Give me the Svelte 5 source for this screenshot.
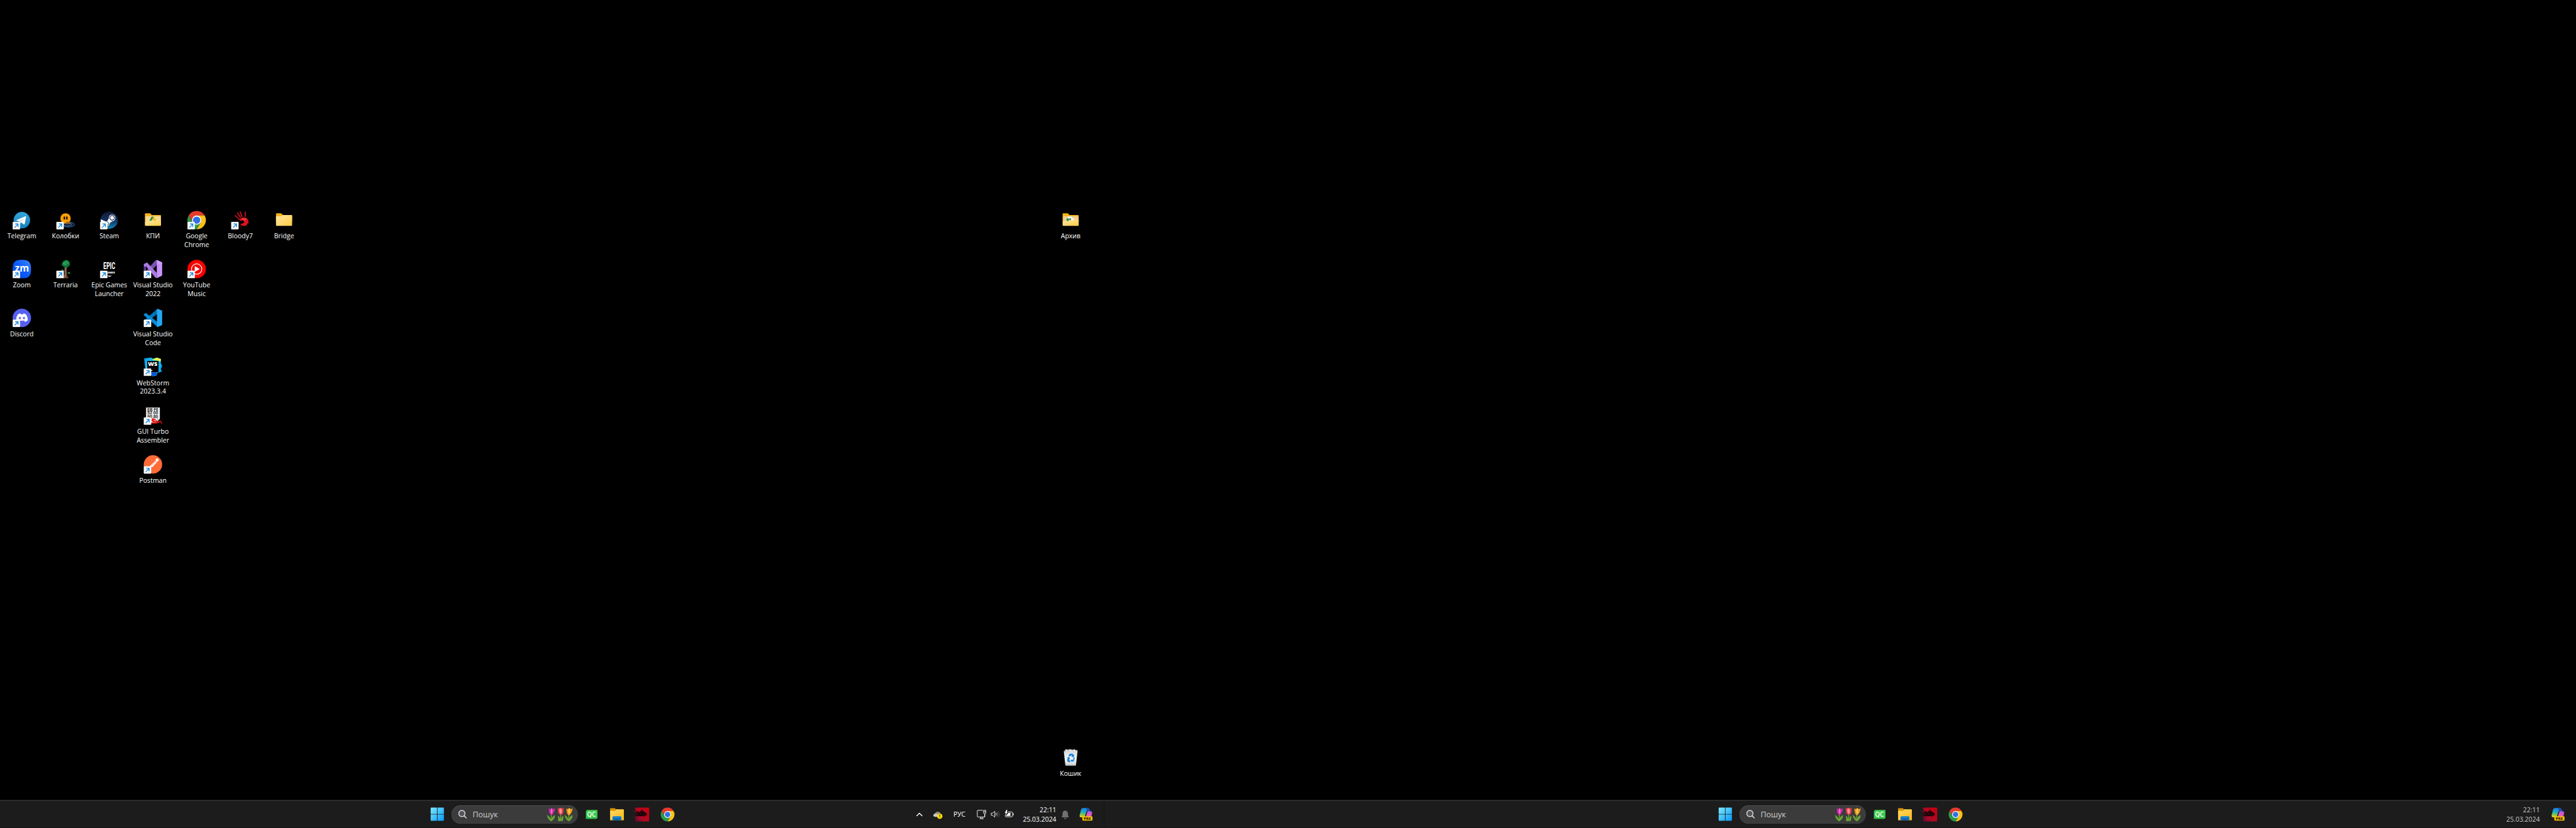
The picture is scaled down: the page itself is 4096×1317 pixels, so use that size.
<script>
  const shortcuts = [
    { icon: 'telegram', lines: ['Telegram'], col: 1, row: 1, link: true },
    { icon: 'kolobki', lines: ['Колобки'], col: 2, row: 1, link: true },
    { icon: 'steam', lines: ['Steam'], col: 3, row: 1, link: true },
    { icon: 'folder-drive', lines: ['КПИ'], col: 4, row: 1 },
    { icon: 'chrome', lines: ['Google', 'Chrome'], col: 5, row: 1, link: true },
    { icon: 'bloody', lines: ['Bloody7'], col: 6, row: 1, link: true },
    { icon: 'folder', lines: ['Bridge'], col: 7, row: 1 },
    { icon: 'folder-docs', lines: ['Архив'], col: 25, row: 1 },
    { icon: 'zoom', lines: ['Zoom'], col: 1, row: 2, link: true },
    { icon: 'terraria', lines: ['Terraria'], col: 2, row: 2, link: true },
    { icon: 'epic', lines: ['Epic Games', 'Launcher'], col: 3, row: 2, link: true },
    { icon: 'vs', lines: ['Visual Studio', '2022'], col: 4, row: 2, link: true },
    { icon: 'ytmusic', lines: ['YouTube', 'Music'], col: 5, row: 2, link: true },
    { icon: 'discord', lines: ['Discord'], col: 1, row: 3, link: true },
    { icon: 'vscode', lines: ['Visual Studio', 'Code'], col: 4, row: 3, link: true },
    { icon: 'webstorm', lines: ['WebStorm', '2023.3.4'], col: 4, row: 4, link: true },
    { icon: 'tasm', lines: ['GUI Turbo', 'Assembler'], col: 4, row: 5, link: true },
    { icon: 'postman', lines: ['Postman'], col: 4, row: 6, link: true },
    { icon: 'bin', lines: ['Кошик'], col: 25, row: 12 }
  ];
</script>

{#snippet chromeLogo()}
  <path fill="#e33b2e" d="M6.400 24A48 48 0 0 1 89.600 24H48L27.200 60Z" />
  <path fill="#fbc116" d="M89.600 24A48 48 0 0 1 48 96L68.800 60 48 24Z" />
  <path fill="#2a9a48" d="M48 96A48 48 0 0 1 6.400 24L27.200 60 48 72 68.800 60Z" />
  <circle cx="48" cy="48" r="24" fill="#fff" />
  <circle cx="48" cy="48" r="19" fill="#2b72e8" />
{/snippet}

{#snippet folderBack()}
  <path fill="#f5b21b" d="M6 16q0-4 4-4h20q3 0 5 2l7 7h44q4 0 4 4v30H6z" />
{/snippet}

{#snippet appIcon(name)}
  {#if name === 'telegram'}
    <circle cx="48" cy="48" r="43" fill="url(#g-tg)" />
    <path fill="#fff" d="M19 48 66 28q4-1 4 3l-7 37q-1 4-5 2L45 60l-7 7q-3 1-3-3l-2-10-13-4q-3-1-1-2z" />
    <path fill="#b9d9ec" d="M34 54 62 36 41 56l-4 11z" />
  {:else if name === 'kolobki'}
    <ellipse cx="63" cy="71" rx="32" ry="13" fill="#071a35" stroke="#3973bd" stroke-width="3" />
    <ellipse cx="58" cy="70" rx="22" ry="8" fill="none" stroke="#83b6f0" stroke-width="2" />
    <circle cx="48" cy="39" r="27" fill="#ff9f00" />
    <ellipse cx="42" cy="37" rx="4.500" ry="9" fill="#241500" />
    <ellipse cx="55" cy="37" rx="4.500" ry="9" fill="#241500" />
    <path fill="#8b642c" d="M46 67q4-11 16-11 10 0 15 10-14 5-31 1z" />
  {:else if name === 'steam'}
    <circle cx="48" cy="48" r="45" fill="url(#g-steam)" />
    <path fill="#fff" d="M3 43 29 55q5-2 8 0L46 38q0-18 16-19 18 2 18 18-1 16-17 17L50 64q-1 15-14 15-10 0-13-10L4 60z" />
    <circle cx="63" cy="36" r="12" fill="#fff" stroke="#15264b" stroke-width="4" />
    <circle cx="36" cy="66" r="9" fill="none" stroke="#15264b" stroke-width="3" />
  {:else if name === 'folder'}
    {@render folderBack()}
    <path fill="url(#g-folder)" d="M6 28h27l8-7h46q3 0 3 4v49q0 4-4 4H10q-4 0-4-4z" />
  {:else if name === 'folder-drive'}
    {@render folderBack()}
    <path fill="#f6d992" d="M9 27h79v40H9z" />
    <path fill="#238b46" d="M41 30h11L40 52H29z" />
    <path fill="#3fa65a" d="M52 30 42 42l-2 10z" opacity=".7" />
    <path fill="#f7b400" d="M52 30 66 52H54L46 40z" />
    <path fill="url(#g-folder)" d="M6 55h22l8-5h54v24q0 4-4 4H10q-4 0-4-4z" />
  {:else if name === 'folder-docs'}
    {@render folderBack()}
    <path fill="#f4d08a" d="M9 27h79v40H9z" />
    <path fill="#fff" d="M34 29h19l12 10v12H34z" />
    <path fill="#cfd6dc" d="M53 29v10h12z" />
    <path fill="#1a8a4e" d="M27 39h23v13H27z" />
    <path fill="#7dc49c" d="M33 43h11v3H33z" />
    <path fill="url(#g-folder)" d="M6 53h28l8-6h48v27q0 4-4 4H10q-4 0-4-4z" />
  {:else if name === 'chrome'}
    {@render chromeLogo()}
  {:else if name === 'bloody'}
    <g fill="none" stroke="#c8101c" stroke-linecap="round">
      <path stroke-width="5.500" d="M22 25 43 44" />
      <path stroke-width="6" d="M33 10 49 34" />
      <path stroke-width="6" d="M47 5 57 30" />
      <path stroke-width="6" d="M73 6 74 28" />
      <path stroke-width="2" d="M22 25l-3-3M46 76 56 91M75 68l5 14M88 58l5 4" />
    </g>
    <path fill="#d8131f" d="M44 43q12-11 29-9 15 3 17 19l-2 8 6 1-9 4q-6 14-20 12-14 0-17-9l12-4q9-3 7-10-5-7-15-4-6 4-8-8z" />
    <path fill="#f04a4a" d="M55 40q15-5 24 3l-5 6q-8-6-19-3z" />
  {:else if name === 'zoom'}
    <path fill="url(#g-zoom)" d="M48 0C84 0 96 12 96 48S84 96 48 96 0 84 0 48 12 0 48 0Z" />
    <text class="zm" x="12" y="62" textLength="73" lengthAdjust="spacingAndGlyphs">zm</text>
  {:else if name === 'terraria'}
    <path fill="#7b513c" d="M42 38h13l-1 35 8 23H37l6-21z" />
    <path fill="#a5745a" d="M46 42h4v48h-4z" />
    <path fill="#4e3226" d="M52 46h3v12h-3zM42 64h4v8h-4zM51 76h4v14h-4zM56 88h6v8h-6z" />
    <path fill="#147a3c" d="M36 5h8V2h15v3h7v7h4v18h-5v7h-7v5H44v-4h-8v-6h-7V16h4v-6h3z" />
    <path fill="#23a455" d="M36 12h10V6h12v8h8v8H54v6H40v-5h-6v-6h2z" />
    <path fill="#0b5428" d="M38 32h8v4h-8zM56 29h7v4h-7zM48 17h5v4h-5zM60 17h5v3h-5z" />
    <path fill="#1c9c48" d="M27 51h9v9h-9zM62 64h9v9h-9z" />
    <path fill="#60453a" d="M36 56h7v4h-7zM55 67h8v4h-8z" />
  {:else if name === 'epic'}
    <text class="epic-main" x="17" y="49" textLength="62" lengthAdjust="spacingAndGlyphs">EPIC</text>
    <text class="epic-sub" x="38" y="70" textLength="40" lengthAdjust="spacingAndGlyphs">AMES</text>
    <path fill="#fff" d="M37 83h25l-13 6z" />
  {:else if name === 'vs'}
    <path fill="#58398c" d="M0 23 18 14l5 8v30L0 73z" />
    <path fill="#000" d="m12 32 18 16-18 16z" />
    <path fill="#7853ae" d="M68 0v27L18 81 0 73 58 6z" />
    <path fill="#a979df" d="M0 23 17 14l51 54v28l-9-5L12 34 3 37z" />
    <path fill="#c793fb" d="m68 0 28 14v68L68 96z" />
    <path fill="#d8aaff" d="M68 0 96 14v8H68z" opacity=".45" />
  {:else if name === 'ytmusic'}
    <circle cx="48" cy="48" r="48" fill="#f90000" />
    <circle cx="48" cy="48" r="27" fill="none" stroke="#fff" stroke-width="4" />
    <path fill="#fff" d="M38 33 64 48 38 63z" />
  {:else if name === 'discord'}
    <circle cx="48" cy="48" r="48" fill="#5661f0" />
    <path fill="#fff" d="M26 31q7-5 15-6l3 5h9l3-5q8 1 15 6 8 13 8 30-7 6-15 8l-4-6q3 0 5-2-17 5-34 0 2 2 5 2l-4 6q-8-2-14-8 0-18 8-30z" />
    <ellipse cx="38" cy="49" rx="5.500" ry="6" fill="#5661f0" />
    <ellipse cx="59" cy="49" rx="5.500" ry="6" fill="#5661f0" />
  {:else if name === 'vscode'}
    <path fill="#0074bb" d="M72 0v26L12 74q-3 1-5-1l-6-6q-1-3 1-5z" />
    <path fill="#0889d6" d="M72 96V70L12 23q-3-1-5 1l-6 6q-1 3 1 5z" />
    <path fill="#25a7f1" d="m72 0 24 11v74L72 96q-4-2-3-6V6q0-4 3-6z" />
  {:else if name === 'webstorm'}
    <path fill="url(#g-ws)" d="M2 4 38 0l10 6 20-6 22 8-1 20 7 16-7 17 6 12-24 8-5 14-22 3-9-13H14L6 42z" />
    <path fill="#e9f04a" d="M42 12 68 0l22 8-3 14-12-5z" />
    <path fill="#0b51db" d="M33 79h34l1 14-22 3z" />
    <path d="M18 18h59v59H18z" />
    <text class="ws" x="22" y="45" textLength="50" lengthAdjust="spacingAndGlyphs">WS</text>
    <path fill="#fff" d="M37 66h8v4h-8z" />
  {:else if name === 'tasm'}
    <path fill="#f2f2f2" d="M12 6h72v58L66 84H12z" />
    <path fill="#bdbdbd" d="M66 84V66h18z" />
    <text class="hex" x="19" y="25" textLength="56" lengthAdjust="spacingAndGlyphs">EB F6</text>
    <text class="hex" x="19" y="43" textLength="56" lengthAdjust="spacingAndGlyphs">52 00</text>
    <text class="hex" x="19" y="61" textLength="56" lengthAdjust="spacingAndGlyphs">90 80</text>
    <path fill="none" stroke="#f01010" stroke-width="5" d="M48 60v20h12M62 68H44v8h20v11H38M68 89V78l8 7 7-8 5 1 6 11" />
  {:else if name === 'postman'}
    <circle cx="48" cy="48" r="48" fill="#ff6c37" />
    <circle cx="70" cy="25" r="8" fill="#fff" />
    <path fill="#fff" d="M62 28 30 59l6 2 9 1 25-27q-6-1-8-7z" />
    <path fill="none" stroke="#ff6c37" stroke-width="2" d="m39 57 23-23M70 22l4 5" />
  {:else if name === 'bin'}
    <path fill="#aab1b5" d="m14 13 8-9 12 3 9-4 14 4 10-3 7 5 9-1 1 9z" />
    <path fill="#eef1f2" d="m18 14 9-8 9 6 13-6 9 6 11-6 9 8z" />
    <path fill="url(#g-bin)" d="M12 14h72l-8 72q-1 4-5 4H25q-4 0-5-4z" />
    <path fill="#b8bfc2" d="M21 82h54l-1 8H22z" opacity=".6" />
    <g fill="#1683dc">
      <path d="m39 33 7-6h12l5 8 4-2-3 14-13-5 4-2-4-6-5 9-10-5z" />
      <path d="m29 48 12-3 4 13-4-2-3 6h7v10H35l-6-11 4-9z" />
      <path d="m61 50 7-4 1 8-5 14H57v4L47 64l10-9v5h6z" />
    </g>
  {/if}
{/snippet}

{#snippet tulip(cls, x)}
  <g class={cls} transform="translate({x} 0)">
    <path class="leaf" d="M21 34h5v37h-5z" />
    <path class="leaf" d="M22 70Q8 66 0 38q18 8 24 32zM24 70q0-24 19-32-1 24-19 32z" />
    <path class="petal" d="M10 4l8 4 7-7 8 6 10-2q-1 12-7 22-6 12-13 13Q10 36 10 4z" />
    <path class="shine" d="M24 3q10 8 2 32-12-14-2-32z" />
  </g>
{/snippet}

{#snippet launcher()}
  <div class="launcher">
    <svg class="start" viewBox="0 0 69 69">
      <path fill="url(#g-win)" d="M0 3q0-3 3-3h30v33H0zM36 0h30q3 0 3 3v30H36zM0 36h33v33H3q-3 0-3-3zM36 36h33v30q0 3-3 3H36z" />
    </svg>
    <div class="search">
      <svg class="lens" viewBox="0 0 15 15">
        <circle cx="6.300" cy="6.300" r="5.400" fill="#55555a" stroke="#dcdce0" stroke-width="1.500" />
        <path d="m10.300 10.300 3.600 3.700" stroke="#dcdce0" stroke-width="1.700" stroke-linecap="round" />
      </svg>
      <span class="hint">Пошук</span>
      <svg class="tulips" viewBox="0 0 141 72">
        {@render tulip('pink', 3)}
        <g class="red">
          <path class="leaf" d="M73 36h5v34h-5zM60 42q13 8 14 28H62q1-14-2-28zM90 42q-12 8-14 28h10q4-14 4-28z" />
          <path class="petal" d="M60 4q15-7 31 0 2 34-15 34T60 4z" />
          <path class="shine" d="M68 8q8-5 12 0 4 18-4 26-9-8-8-26z" />
        </g>
        {@render tulip('gold', 95)}
      </svg>
    </div>
    <svg class="qc" viewBox="0 0 60 48">
      <path fill="#3acb4e" d="M6 0h54v42l-6 5H0V6z" />
      <path fill="#22943a" d="M0 43h58l-4 4H0z" opacity=".6" />
      <text class="qc-text" x="6" y="35" textLength="45" lengthAdjust="spacingAndGlyphs">QC</text>
    </svg>
    <svg class="explorer" viewBox="0 0 72 66">
      <path fill="#d99608" d="M0 2q0-2 3-2h20q3 0 5 3l3 3h10v14H0z" />
      <path fill="url(#g-exp)" d="M0 14h26l7-8h36q3 0 3 3v51q0 3-3 3H3q-3 0-3-3z" />
      <path fill="#0b6fc2" d="M13 63V48q0-5 5-5h36q5 0 5 5v15z" />
      <path fill="#1783d8" d="M13 51v-3q0-5 5-5h36q5 0 5 5v3z" />
      <path fill="#064d92" d="M24 54h24v9H24z" opacity=".5" />
    </svg>
    <svg class="dragon" viewBox="0 0 72 72">
      <path fill="url(#g-drg)" d="M0 0h72v72H0z" />
      <path fill="#1a0509" d="M0 24l15 2 11-3-4-7 14 5 2-9 5 9 12 5 6 9-6 8-7-3 1 8-10-5-14 3-10-3-15 1z" />
      <path fill="#1a0509" d="M4 15 22 24l-9 4-6-4zM33 8l8 14H31z" />
      <path fill="#b00820" d="m44 32 9 1-3 3zM27 29l7 2-6 2zM4 31l12 2-12 2z" />
      <path fill="#5f0a2c" d="M0 46 19 45 8 57l14 15H0z" opacity=".6" />
    </svg>
    <svg class="chrome" viewBox="0 0 96 96">{@render chromeLogo()}</svg>
  </div>
{/snippet}

{#snippet copilot()}
  <svg class="copilot" viewBox="0 0 70 69">
    <path fill="url(#g-cop1)" d="M18 2h28q7 1 9 9l3 8H44q-6 0-8 8l-5 18q-3 6-9 6H8Q0 50 2 40L9 11q3-8 9-9z" />
    <path fill="#154fae" d="M36 3h10q7 1 9 9l3 8H45q-5-2-9-17z" />
    <path fill="url(#g-cop2)" d="M48 18h13q9 2 7 12l-5 19q-2 8-10 8H26q7-1 9-9l6-22q2-7 7-8z" />
    <path fill="#1b1b1b" d="M39 19h6q-4 2-6 9l-5 18q-1 4-6 4 2-2 3-5l6-20z" />
    <rect x="16" y="46" width="54" height="22" rx="4" fill="#ffc400" />
    <text class="pre" x="23" y="63.500" textLength="39" lengthAdjust="spacingAndGlyphs">PRE</text>
  </svg>
{/snippet}

{#snippet clock()}
  <div class="clock"><span>22:11</span><span>25.03.2024</span></div>
{/snippet}

<div class="viewport">
<main class="screen">
  <svg class="defs" width="0" height="0">
    <defs>
      <linearGradient id="g-tg" x2="0" y2="1"><stop stop-color="#35a6dd" /><stop offset="1" stop-color="#1581ba" /></linearGradient>
      <linearGradient id="g-steam" x2="0" y2="1"><stop stop-color="#151935" /><stop offset=".5" stop-color="#12305e" /><stop offset="1" stop-color="#1585b8" /></linearGradient>
      <linearGradient id="g-folder" x2="1" y2="1"><stop stop-color="#ffe8a4" /><stop offset="1" stop-color="#ffcb42" /></linearGradient>
      <linearGradient id="g-zoom" x1="1" x2="0" y2="1"><stop stop-color="#3f86ff" /><stop offset=".5" stop-color="#0b5cff" /><stop offset="1" stop-color="#0747cf" /></linearGradient>
      <linearGradient id="g-ws" x2="1" y2=".6"><stop stop-color="#1691f0" /><stop offset=".4" stop-color="#14bfe6" /><stop offset="1" stop-color="#0fa5ef" /></linearGradient>
      <linearGradient id="g-bin" x2="0" y2="1"><stop stop-color="#d6dadc" /><stop offset=".5" stop-color="#f1f3f4" /><stop offset="1" stop-color="#d2d7d9" /></linearGradient>
      <linearGradient id="g-win" x2="1" y2="1"><stop stop-color="#7ceafd" /><stop offset="1" stop-color="#0a98f8" /></linearGradient>
      <linearGradient id="g-exp" x2="1" y2="1"><stop stop-color="#ffd966" /><stop offset="1" stop-color="#fcb913" /></linearGradient>
      <linearGradient id="g-drg" x1="1" x2="0" y2="1"><stop stop-color="#c9000f" /><stop offset=".6" stop-color="#b00822" /><stop offset="1" stop-color="#7d0c38" /></linearGradient>
      <linearGradient id="g-cop1" x1=".5" x2=".3" y2="1"><stop stop-color="#1c82e6" /><stop offset=".4" stop-color="#1fa6c6" /><stop offset=".7" stop-color="#72c25a" /><stop offset="1" stop-color="#f0d21c" /></linearGradient>
      <linearGradient id="g-cop2" x1=".8" x2=".3" y2="1"><stop stop-color="#a259f0" /><stop offset=".5" stop-color="#e65cb0" /><stop offset="1" stop-color="#ff7a58" /></linearGradient>
    </defs>
  </svg>

  <section class="desktop">
    {#each shortcuts as s}
      <div class="shortcut" style:grid-column={s.col} style:grid-row={s.row}>
        <svg class="icon" viewBox="0 0 96 96">
          {@render appIcon(s.icon)}
          {#if s.link}
            <rect x="0.500" y="57.500" width="38" height="38" rx="2" fill="#fff" stroke="#d5d5d5" />
            <path fill="none" stroke="#1a86d9" stroke-width="4.500" d="M10 87 27 70M13 68h15v16" />
          {/if}
        </svg>
        {#each s.lines as line}<span class="label">{line}</span>{/each}
      </div>
    {/each}
  </section>

  <footer class="bars">
    <nav class="bar primary">
      {@render launcher()}
      <div class="tray">
        <svg class="chevron" viewBox="0 0 12 8"><path d="m1 6.800 5-5 5 5" fill="none" stroke="#fff" stroke-width="1.500" /></svg>
        <svg class="cloud" viewBox="0 0 48 42">
          <path fill="#8d8d8d" d="M9 12Q14 2 25 3q10 1 14 11l4 8-20 8-16-4z" />
          <path fill="#c9c9c9" d="M9 14q8-3 14 5l12 11H9q-8-1-9-8 1-7 9-8z" />
          <circle cx="34" cy="27" r="14" fill="#ffe000" />
          <path d="M32.500 18h3v11h-3zM32.500 32h3v3h-3z" />
        </svg>
        <span class="lang">РУС</span>
        <svg class="net" viewBox="0 0 48 48">
          <path fill="none" stroke="#fff" stroke-width="3" d="M31 2H5q-3 0-3 3v29q0 3 3 3h35V24M14 46h21M20 37v9M29 37v9M35 2h11v14q0 5-5 5t-6-5zM41 21v16M35 10h11" />
        </svg>
        <svg class="sound" viewBox="0 0 48 40">
          <path fill="none" stroke="#fff" stroke-width="3" stroke-linejoin="round" d="M2 14h8L21 4v32L10 26H2z" />
          <path fill="none" stroke="#fff" stroke-width="3" d="M27 13q5 7 0 14" />
          <path fill="none" stroke="#8a8a8a" stroke-width="3" d="M33 8q8 12 0 24" />
          <path fill="none" stroke="#555" stroke-width="3" d="M39 3q13 17 0 34" />
        </svg>
        <svg class="battery" viewBox="0 0 48 40">
          <path fill="none" stroke="#fff" stroke-width="3" d="M18 11h20q4 0 4 4v18q0 4-4 4H8q-4 0-4-4v-8M44 19h3v9h-3" />
          <path fill="#fff" d="M19 16h12v16H9v-6l7-3zM9 0 1 17h6L4 27 17 11h-6L15 0z" />
        </svg>
        {@render clock()}
        <svg class="bell" viewBox="0 0 39 45">
          <path fill="#707070" d="M5 17Q6 1 19.500 0 33 1 34 17v10l5 9H0l5-9zM13 39h13q-1 6-6.500 6T13 39z" />
        </svg>
        {@render copilot()}
      </div>
    </nav>
    <nav class="bar secondary">
      {@render launcher()}
      <div class="tray">
        {@render clock()}
        {@render copilot()}
      </div>
    </nav>
  </footer>
</main>
</div>

<style>
  :global(body) {
    margin: 0;
    background: #000;
  }
  .viewport {
    width: 4096px;
    height: 1317px;
    overflow: hidden;
    background: #1c1c1c;
  }
  .screen {
    display: flex;
    flex-direction: column;
    box-sizing: border-box;
    width: 4480px;
    height: 1440px;
    padding-top: 367px;
    background: #000;
    color: #fff;
    font-family: "Open Sans", "Noto Sans", sans-serif;
    transform: scale(0.9142857);
    transform-origin: 0 0;
  }
  .defs { height: 0; }
  svg { display: block; flex: none; overflow: visible; }
  .desktop {
    display: grid;
    flex: 1;
    grid-template-columns: repeat(25, 76px);
    grid-template-rows: repeat(12, 85px);
    align-content: start;
  }
  .shortcut {
    display: flex;
    flex-direction: column;
    align-items: center;
  }
  .icon { width: 32px; height: 32px; margin-bottom: 4px; }
  .label {
    font-size: 11.5px;
    line-height: 15px;
    white-space: nowrap;
  }
  .zm { font: 700 50px "Open Sans", sans-serif; fill: #fff; }
  .epic-main { font: 700 50px Roboto, sans-serif; fill: #fff; }
  .epic-sub { font: 900 13px Roboto, sans-serif; fill: #fff; }
  .ws { font: 800 31px "Open Sans", sans-serif; fill: #fff; }
  .hex { font: 700 21px "Liberation Sans", sans-serif; fill: #222; }
  .bars { display: flex; flex: none; height: 48px; }
  .bar {
    display: flex;
    justify-content: space-between;
    align-items: center;
    box-sizing: border-box;
    height: 48px;
    border-top: 1px solid #464646;
    background: #1c1c1c;
  }
  .primary { width: 1920px; padding: 0 20px 0 749px; }
  .secondary { width: 2560px; padding: 0 20px 0 1069px; }
  .launcher, .tray { display: flex; align-items: center; }
  .start { width: 23px; height: 23px; margin-right: 13px; }
  .search {
    display: flex;
    align-items: center;
    box-sizing: border-box;
    width: 220px;
    height: 32px;
    padding: 0 7px 0 11px;
    margin-right: 14px;
    border: 1px solid #484848;
    border-top-color: #5c5c5c;
    border-radius: 16px;
    background: #3b3b3b;
  }
  .lens { width: 15px; height: 15px; margin-right: 10px; }
  .hint { flex: 1; color: #cfcfcf; font-size: 13.6px; line-height: 18px; }
  .tulips { width: 47px; height: 24px; }
  .leaf { fill: #6aa832; }
  .pink .petal { fill: #c9279f; }
  .pink .shine { fill: #f46bd0; }
  .red .petal { fill: #d93a4c; }
  .red .shine { fill: #ff9a94; }
  .gold .petal { fill: #e99a1c; }
  .gold .shine { fill: #ffcb55; }
  .qc { width: 20px; height: 16px; margin-right: 22px; }
  .qc-text { font: 600 33px "Open Sans", sans-serif; fill: #fff; }
  .explorer { width: 24px; height: 22px; margin-right: 20px; }
  .dragon { width: 24px; height: 24px; margin-right: 20px; }
  .chrome { width: 24px; height: 24px; }
  .chevron { width: 12px; height: 8px; margin-right: 18px; }
  .cloud { width: 16px; height: 14px; margin: 2px 19px 0 0; }
  .lang { width: 21px; margin-right: 20px; font-size: 11.4px; line-height: 16px; white-space: nowrap; }
  .net { width: 16px; height: 16px; margin-right: 8px; }
  .sound { width: 16px; height: 13px; margin-right: 8px; }
  .battery { width: 16px; height: 13px; margin: 0 16px 2px 0; }
  .clock {
    display: flex;
    flex-direction: column;
    align-items: flex-end;
    width: 58px;
    font-size: 11.4px;
    line-height: 16px;
    white-space: nowrap;
  }
  .secondary .clock { margin-right: 20px; color: #c8c8c8; }
  .bell { width: 13px; height: 15px; margin: 1px 18px 0 9px; }
  .copilot { width: 23px; height: 23px; }
  .pre { font: 800 18px "Open Sans", sans-serif; fill: #332600; }
</style>
